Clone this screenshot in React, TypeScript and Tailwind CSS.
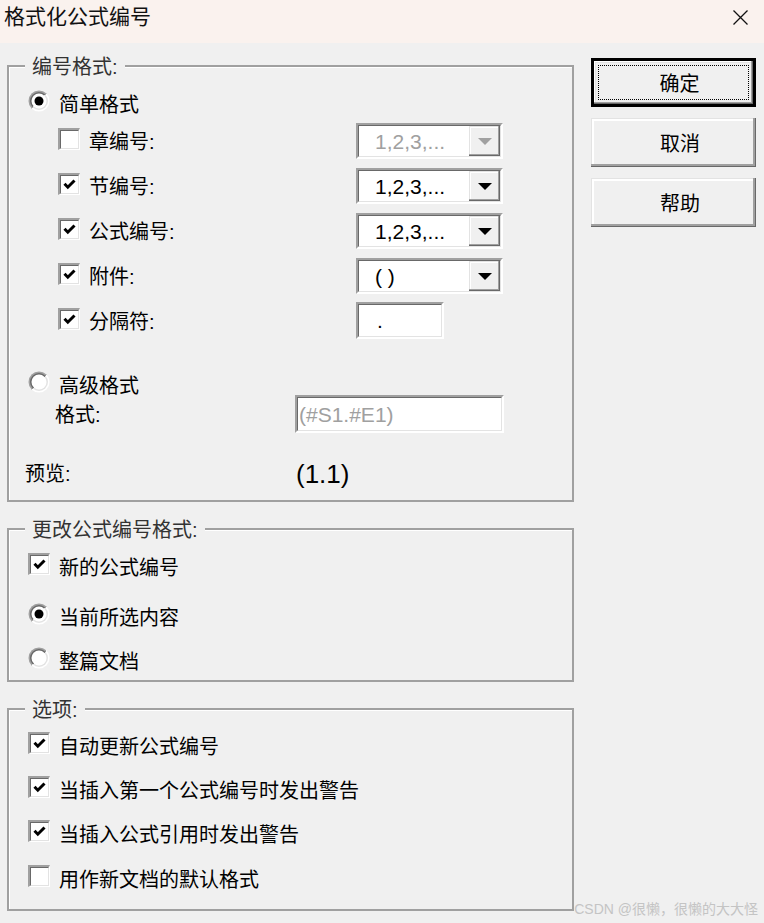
import React from "react";

function Radio({ checked }: { checked?: boolean }) {
  return (
    <svg width="22" height="22" viewBox="0 0 22 22" className="mb-[4px] shrink-0">
      <defs>
        <linearGradient id="rgo" x1="0" y1="0" x2="1" y2="1">
          <stop offset="0.5" stopColor="#a0a0a0" />
          <stop offset="0.5" stopColor="#ffffff" />
        </linearGradient>
        <linearGradient id="rgi" x1="0" y1="0" x2="1" y2="1">
          <stop offset="0.5" stopColor="#696969" />
          <stop offset="0.5" stopColor="#e3e3e3" />
        </linearGradient>
      </defs>
      <circle cx="11" cy="11" r="10.5" fill="url(#rgo)" />
      <circle cx="11" cy="11" r="9" fill="url(#rgi)" />
      <circle cx="11" cy="11" r="7.5" fill="#ffffff" />
      {checked && <circle cx="11" cy="11" r="4.5" fill="#000000" />}
    </svg>
  );
}

function Check({ checked }: { checked?: boolean }) {
  return (
    <div className="mb-[4px] h-[22px] w-[22px] shrink-0 border-t-2 border-l-2 border-r border-b border-t-[#a0a0a0] border-l-[#a0a0a0] border-r-white border-b-white">
      <div className="flex h-full w-full items-center justify-center border border-t-[#696969] border-l-[#696969] border-r-[#e3e3e3] border-b-[#e3e3e3] bg-white">
        {checked && (
          <svg width="13" height="11" viewBox="0 0 13 11">
            <path d="M1.5 4.8 L4.8 8.2 L11.5 1.5" stroke="#000" strokeWidth="3" fill="none" />
          </svg>
        )}
      </div>
    </div>
  );
}

function Combo({ text, disabled }: { text: string; disabled?: boolean }) {
  return (
    <div className="flex h-[36px] w-[147px] shrink-0 border-2 border-t-[#a0a0a0] border-l-[#a0a0a0] border-r-white border-b-white">
      <div className="flex flex-1 items-center border border-t-[#696969] border-l-[#696969] border-r-[#e3e3e3] border-b-[#e3e3e3] bg-white">
        <span
          className={
            disabled
              ? "flex-1 pl-[16px] text-[21px] leading-none text-[#a0a0a0]"
              : "flex-1 pl-[16px] text-[21px] leading-none text-black"
          }
        >
          {text}
        </span>
        <div className="flex h-full w-[31px] items-center justify-center bg-[#f0f0f0] shadow-[inset_-1px_-1px_0_#696969,inset_-2px_-2px_0_#a0a0a0,inset_1px_1px_0_#e3e3e3,inset_2px_2px_0_#ffffff]">
          <svg width="14" height="7" viewBox="0 0 14 7">
            <path d="M0 0 H14 L7 7 Z" fill={disabled ? "#a0a0a0" : "#000000"} />
          </svg>
        </div>
      </div>
    </div>
  );
}

function Row({ children, className }: { children: React.ReactNode; className: string }) {
  return <div className={"flex items-center " + className}>{children}</div>;
}

function Label({ children }: { children: React.ReactNode }) {
  return (
    <span className="inline-block translate-y-[2px] text-[20px] leading-[24px] text-black">{children}</span>
  );
}

function Legend({ children }: { children: React.ReactNode }) {
  return (
    <div className="-mt-[15px] ml-[16px] h-[28px] w-fit bg-[#f0f0f0] px-[7px] pt-[3px] text-[20px] leading-[25px] text-[#333333]">
      {children}
    </div>
  );
}

function Button({ children, isDefault }: { children: React.ReactNode; isDefault?: boolean }) {
  if (isDefault) {
    return (
      <div className="flex h-[49px] w-[165px] border-[3px] border-black">
        <div className="flex flex-1 bg-[#f0f0f0] shadow-[inset_-1px_-1px_0_#696969,inset_-2px_-2px_0_#a0a0a0,inset_1px_1px_0_#ffffff,inset_2px_2px_0_#e3e3e3]">
          <div className="m-[4px] flex flex-1 items-center justify-center border border-dotted border-black pl-[12px] text-[20px] leading-[24px] text-black">
            <span className="translate-y-[1px]">{children}</span>
          </div>
        </div>
      </div>
    );
  }
  return (
    <div className="flex h-[49px] w-[165px] items-center justify-center bg-[#f0f0f0] pl-[13px] text-[20px] leading-[24px] text-black shadow-[inset_-1px_-1px_0_#696969,inset_-3px_-3px_0_#a0a0a0,inset_1px_1px_0_#e3e3e3,inset_3px_3px_0_#ffffff]">
      <span className="translate-y-[1px]">{children}</span>
    </div>
  );
}

export default function App() {
  return (
    <div className="relative flex h-[923px] w-[764px] flex-col overflow-hidden bg-[#f0f0f0] font-['Liberation_Sans','Noto_Sans_CJK_SC',sans-serif]">
      {/* Title bar */}
      <div className="flex h-[43px] shrink-0 items-start justify-between bg-[#faf2ee] pl-[4px] pr-[16px]">
        <span className="pt-[5px] text-[21px] leading-[24px] text-[#111111]">格式化公式编号</span>
        <svg width="15" height="15" viewBox="0 0 15 15" className="mt-[10px]">
          <path d="M0.5 0.5 L14.5 14.5 M14.5 0.5 L0.5 14.5" stroke="#111" strokeWidth="1.3" />
        </svg>
      </div>

      {/* Body */}
      <div className="flex pl-[7px] pt-[15px]">
        {/* Left column */}
        <div className="flex w-[567px] flex-col pt-[7px]">
          {/* Group 1 */}
          <div className="border-2 border-[#a0a0a0] pb-[15px] shadow-[inset_1px_1px_0_#ffffff]">
            <Legend>编号格式:</Legend>
            <Row className="ml-[19px] mt-[11px] h-[24px] gap-[9px]">
              <Radio checked />
              <Label>简单格式</Label>
            </Row>
            <Row className="ml-[49px] mt-[8px] h-[36px]">
              <Check />
              <div className="ml-[9px] w-[267px]">
                <Label>章编号:</Label>
              </div>
              <Combo text="1,2,3,..." disabled />
            </Row>
            <Row className="ml-[49px] mt-[9px] h-[36px]">
              <Check checked />
              <div className="ml-[9px] w-[267px]">
                <Label>节编号:</Label>
              </div>
              <Combo text="1,2,3,..." />
            </Row>
            <Row className="ml-[49px] mt-[9px] h-[36px]">
              <Check checked />
              <div className="ml-[9px] w-[267px]">
                <Label>公式编号:</Label>
              </div>
              <Combo text="1,2,3,..." />
            </Row>
            <Row className="ml-[49px] mt-[9px] h-[36px]">
              <Check checked />
              <div className="ml-[9px] w-[267px]">
                <Label>附件:</Label>
              </div>
              <Combo text="( )" />
            </Row>
            <Row className="ml-[49px] mt-[8px] h-[37px]">
              <Check checked />
              <div className="ml-[9px] w-[267px]">
                <Label>分隔符:</Label>
              </div>
              <div className="flex h-[37px] w-[88px] border-2 border-t-[#a0a0a0] border-l-[#a0a0a0] border-r-white border-b-white">
                <div className="flex flex-1 items-center border border-t-[#696969] border-l-[#696969] border-r-[#e3e3e3] border-b-[#e3e3e3] bg-white pl-[18px] text-[21px] leading-none text-black">
                  .
                </div>
              </div>
            </Row>
            <Row className="ml-[19px] mt-[33px] h-[23px] gap-[9px]">
              <Radio />
              <Label>高级格式</Label>
            </Row>
            <Row className="ml-[46px] h-[38px]">
              <div className="w-[240px]">
                <Label>格式:</Label>
              </div>
              <div className="flex h-[38px] w-[209px] border-2 border-t-[#a0a0a0] border-l-[#a0a0a0] border-r-white border-b-white">
                <div className="flex flex-1 items-center border border-t-[#696969] border-l-[#696969] border-r-[#e3e3e3] border-b-[#e3e3e3] bg-white pl-[1px] text-[21px] leading-none text-[#a0a0a0]">
                  (#S1.#E1)
                </div>
              </div>
            </Row>
            <Row className="ml-[16px] mt-[28px] h-[24px]">
              <div className="w-[271px]">
                <Label>预览:</Label>
              </div>
              <span className="translate-y-[1px] text-[26px] leading-[24px] text-black">(1.1)</span>
            </Row>
          </div>

          {/* Group 2 */}
          <div className="mt-[26px] border-2 border-[#a0a0a0] pb-[8px] shadow-[inset_1px_1px_0_#ffffff]">
            <Legend>更改公式编号格式:</Legend>
            <Row className="ml-[19px] mt-[11px] h-[24px] gap-[9px]">
              <Check checked />
              <Label>新的公式编号</Label>
            </Row>
            <Row className="ml-[19px] mt-[26px] h-[24px] gap-[9px]">
              <Radio checked />
              <Label>当前所选内容</Label>
            </Row>
            <Row className="ml-[19px] mt-[20px] h-[24px] gap-[9px]">
              <Radio />
              <Label>整篇文档</Label>
            </Row>
          </div>

          {/* Group 3 */}
          <div className="mt-[26px] border-2 border-[#a0a0a0] pb-[19px] shadow-[inset_1px_1px_0_#ffffff]">
            <Legend>选项:</Legend>
            <Row className="ml-[19px] mt-[10px] h-[24px] gap-[9px]">
              <Check checked />
              <Label>自动更新公式编号</Label>
            </Row>
            <Row className="ml-[19px] mt-[20px] h-[24px] gap-[9px]">
              <Check checked />
              <Label>当插入第一个公式编号时发出警告</Label>
            </Row>
            <Row className="ml-[19px] mt-[20px] h-[24px] gap-[9px]">
              <Check checked />
              <Label>当插入公式引用时发出警告</Label>
            </Row>
            <Row className="ml-[19px] mt-[21px] h-[24px] gap-[9px]">
              <Check />
              <Label>用作新文档的默认格式</Label>
            </Row>
          </div>
        </div>

        {/* Right column */}
        <div className="ml-[17px] flex flex-col gap-[11px]">
          <Button isDefault>确定</Button>
          <Button>取消</Button>
          <Button>帮助</Button>
        </div>
      </div>

      {/* Watermark */}
      <div className="absolute bottom-[6px] right-[6px] text-[14px] leading-[16px] text-[#c4c4c4]">
        CSDN @很懒，很懒的大大怪
      </div>
    </div>
  );
}
